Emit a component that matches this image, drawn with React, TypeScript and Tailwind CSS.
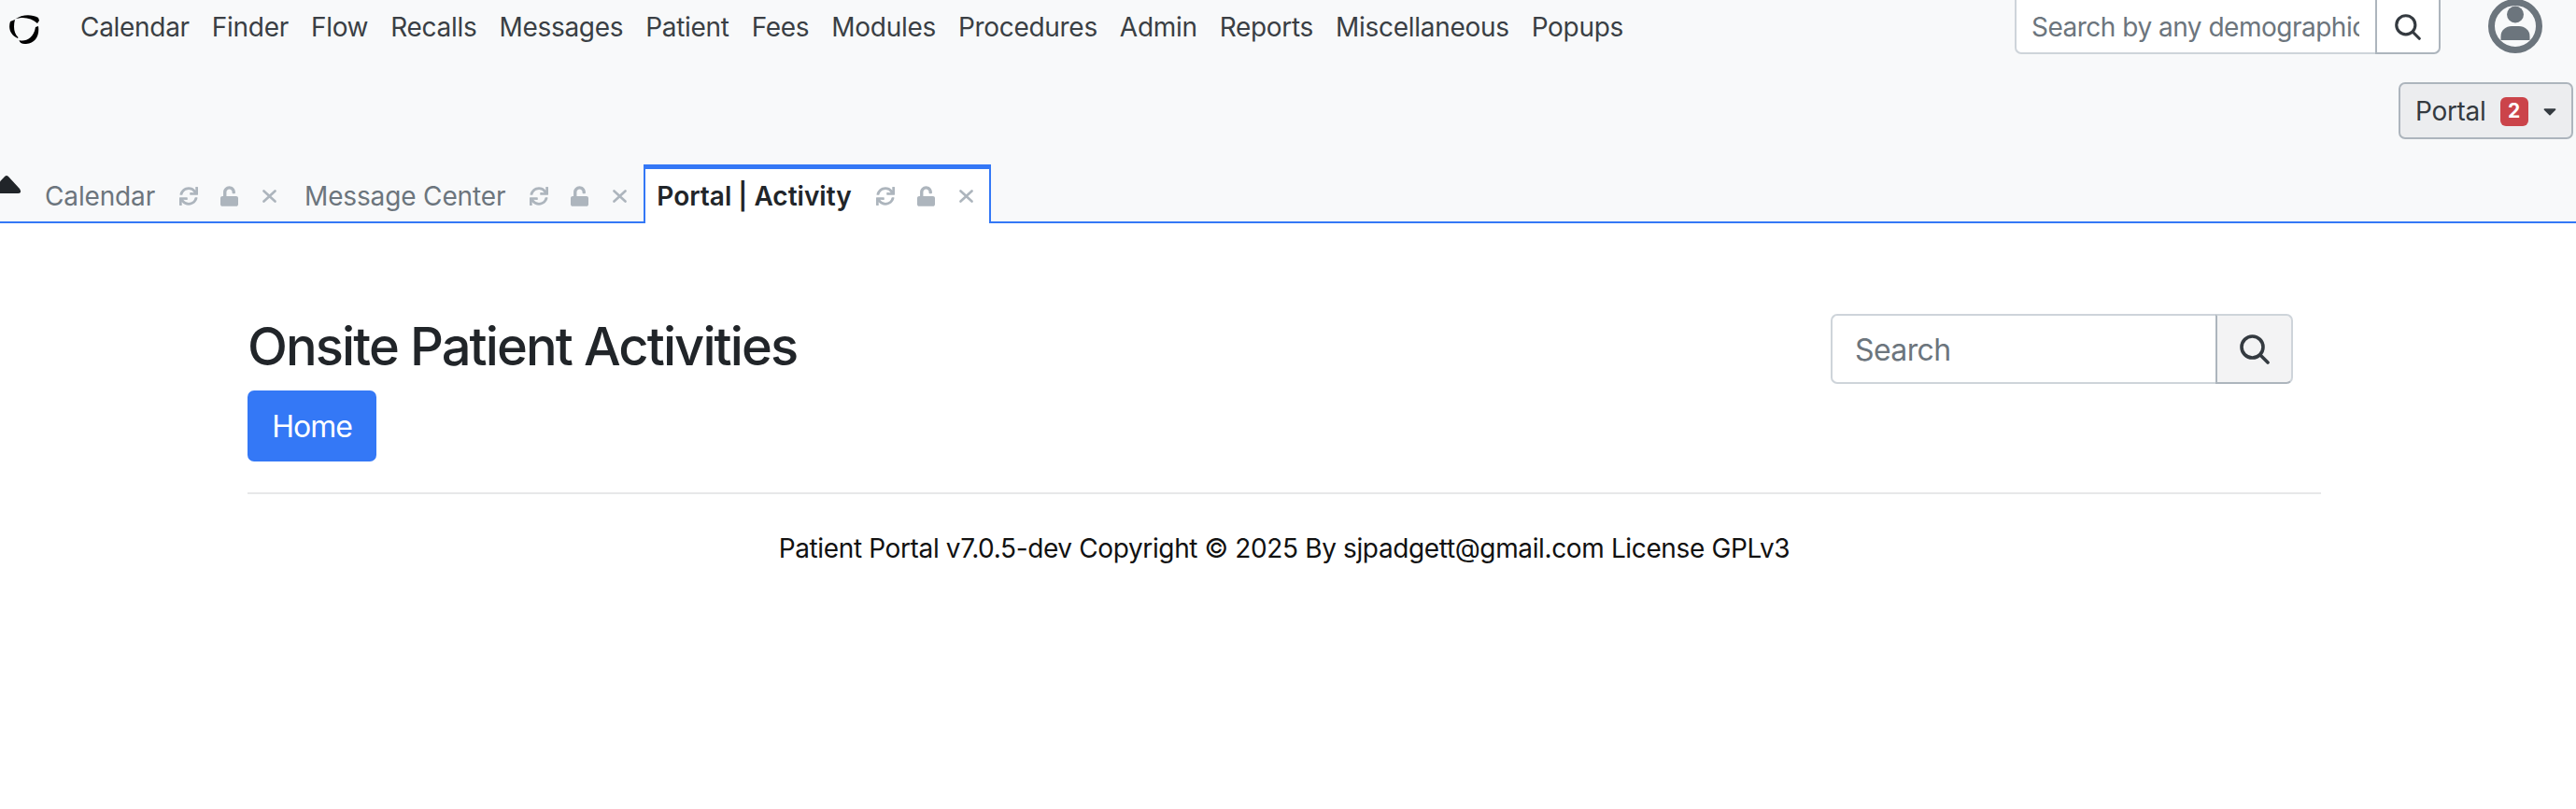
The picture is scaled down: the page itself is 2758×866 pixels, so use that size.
import React from 'react';
import { FaSync, FaUnlock, FaCaretDown } from 'react-icons/fa';

const navItems = ['Calendar', 'Finder', 'Flow', 'Recalls', 'Messages', 'Patient', 'Fees', 'Modules', 'Procedures', 'Admin', 'Reports', 'Miscellaneous', 'Popups'];

const Logo = () => (
  <svg viewBox="0 0 32 32" className="w-8 h-8 shrink-0" fill="#000">
    <path d="M6 4.5C14 -1 24 -1 31 3L32 6L30 9C24 3 14 1.5 6 4.5Z" />
    <path d="M1 7C-1 13 0 21 9 25L9.5 24C5 20 4 13 6 5Z" />
    <path d="M10.5 27C16 29 26 26 28 13L31 12C32.5 22 28 30 18 31C14 31.5 11 30 10.5 27Z" />
  </svg>
);

const SearchIcon = ({ className }: { className: string }) => (
  <svg viewBox="0 0 32 32" className={className} fill="none" stroke="#343a40" strokeWidth="3.6" strokeLinecap="round">
    <circle cx="13.5" cy="13.5" r="11.5" />
    <path d="M22 22L30 30" />
  </svg>
);

const UserIcon = () => (
  <svg viewBox="0 0 58 58" className="w-[58px] h-[58px]" fill="#6c757d">
    <circle cx="29" cy="29" r="25.5" fill="none" stroke="#6c757d" strokeWidth="7" />
    <circle cx="29" cy="16.5" r="9" />
    <path d="M13.5 44V40C13.5 33 19 29 25 29H33C39 29 44.5 33 44.5 40V44Z" />
  </svg>
);

const TabTools = () => (
  <div className="flex items-center ml-[26px] text-[#adb5bd]">
    <FaSync className="w-[20px] h-[20px]" />
    <FaUnlock className="w-[19px] h-[22px] ml-[24px]" />
    <svg viewBox="0 0 15 14" className="w-[15px] h-[14px] ml-[26px]" stroke="currentColor" strokeWidth="2.6" strokeLinecap="round">
      <path d="M1.5 1.5L13.5 12.5M13.5 1.5L1.5 12.5" />
    </svg>
  </div>
);

const App = () => {
  return (
    <div className="min-h-[866px] bg-white overflow-hidden text-[#212529] font-['Inter',sans-serif]">
      <header className="bg-[#f8f9fa] border-b-2 border-[#3478f6] h-[239px]">
        <div className="flex h-[58px] pl-[10px]">
          <div className="pt-[16px]">
            <Logo />
          </div>
          <nav className="flex gap-[24px] ml-[44px] h-[58px] items-center text-[28px] leading-none tracking-[-0.3px] text-[#3a3f44]">
            {navItems.map((item) => (
              <a key={item} className="whitespace-nowrap">{item}</a>
            ))}
          </nav>
          <div className="ml-auto flex h-[76px] -mt-[18px] w-[456px]">
            <input
              placeholder="Search by any demographics"
              className="w-[386px] h-full bg-white border-2 border-r-0 border-[#ced4da] rounded-l-[7px] pt-[18px] pl-[16px] pr-[17px] text-[28px] tracking-[-0.5px] outline-none placeholder:text-[#6c757d]"
            />
            <button className="flex-1 flex items-center justify-center pt-[18px] bg-white border-2 border-[#adb5bd] border-t-[#ced4da] rounded-r-[7px]">
              <SearchIcon className="w-[28px] h-[28px]" />
            </button>
          </div>
          <div className="ml-[51px] mr-[36px] -mt-[1px]">
            <UserIcon />
          </div>
        </div>
        <div className="flex justify-end mt-[30px] pr-[3px]">
          <button className="flex items-center h-[61px] w-[187px] pl-[16px] pt-[1px] bg-[#ecedef] border-2 border-[#adb5bd] rounded-[7px] text-[28px] tracking-[-0.3px] text-[#343a40]">
            Portal
            <span className="ml-[15px] w-[30px] h-[31px] flex items-center justify-center bg-[#cb444a] rounded-[6px] text-white text-[21px] font-bold">2</span>
            <FaCaretDown className="ml-[13px] w-[20px] h-[22px] text-[#343a40]" />
          </button>
        </div>
        <div className="flex items-end mt-[27px] h-[63px]">
          <svg viewBox="0 0 22 19" className="w-[22px] h-[19px] self-start mt-[12px] shrink-0" fill="#212529">
            <path d="M-12 19L5 1Q7 -1 9 1L21 14Q24 19 19 19Z" />
          </svg>
          <div className="flex items-center h-[61px] pl-[26px] pr-[14px] pt-[2px] text-[28px] tracking-[-0.15px] text-[#6c757d]">
            Calendar
            <TabTools />
          </div>
          <div className="flex items-center h-[61px] pl-[16px] pr-[14px] pt-[2px] text-[28px] tracking-[-0.15px] text-[#6c757d]">
            Message Center
            <TabTools />
          </div>
          <div className="flex items-center ml-[4px] h-[63px] pl-[12px] pr-[17px] bg-white border-x-2 border-t-[5px] border-[#3478f6] text-[28px] font-semibold">
            Portal | Activity
            <TabTools />
          </div>
        </div>
      </header>
      <main className="ml-[265px] w-[2220px] pt-[97px]">
        <div className="flex justify-between items-start pr-[30px]">
          <div>
            <h1 className="text-[56px] h-[67px] leading-[70px] font-medium tracking-[-1.9px] whitespace-nowrap">Onsite Patient Activities</h1>
            <button className="mt-[15px] h-[76px] w-[138px] pt-[2px] bg-[#3478f6] text-white text-[32px] tracking-[-1px] rounded-[7px]">Home</button>
          </div>
          <div className="flex h-[75px] w-[495px]">
            <input
              placeholder="Search"
              className="w-[412px] h-full border-2 border-r-0 border-[#ced4da] rounded-l-[7px] pt-[2px] pl-[24px] pr-[25px] text-[32px] tracking-[-0.6px] outline-none placeholder:text-[#6c757d]"
            />
            <button className="flex-1 flex items-center justify-center bg-[#f3f3f4] border-2 border-[#adb5bd] border-t-[#ced4da] border-r-[#ced4da] rounded-r-[7px]">
              <SearchIcon className="w-[32px] h-[32px]" />
            </button>
          </div>
        </div>
        <hr className="mt-[33px] border-t-2 border-[#e7e8e9]" />
        <p className="mt-[37px] text-center text-[28px] leading-[42px] tracking-[-0.37px] text-[#111]">
          Patient Portal v7.0.5-dev Copyright © 2025 By sjpadgett@gmail.com License GPLv3
        </p>
      </main>
    </div>
  );
};

export default App;
